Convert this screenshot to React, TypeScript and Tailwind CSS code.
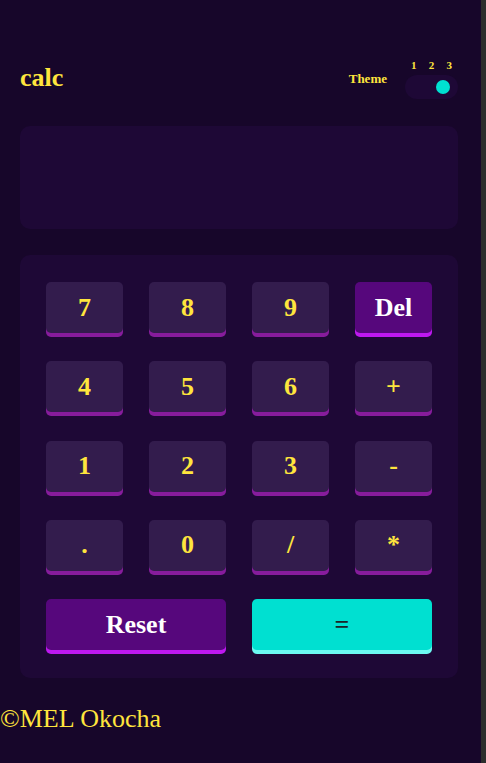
import React from "react";

const serif = "font-['Liberation_Serif','Times_New_Roman',serif]";

type K = { label: string; kind?: "num" | "del" | "eq"; wide?: boolean };

const keys: K[] = [
  { label: "7" }, { label: "8" }, { label: "9" }, { label: "Del", kind: "del" },
  { label: "4" }, { label: "5" }, { label: "6" }, { label: "+" },
  { label: "1" }, { label: "2" }, { label: "3" }, { label: "-" },
  { label: "." }, { label: "0" }, { label: "/" }, { label: "*" },
  { label: "Reset", kind: "del", wide: true }, { label: "=", kind: "eq", wide: true },
];

function Key({ k }: { k: K }) {
  const base =
    "h-[51px] rounded-[5px] flex items-center justify-center text-[26px] leading-[26px] font-bold";
  let cls = "bg-[#331c4d] text-[#ffe53d] shadow-[0_4px_0_#871c9c]";
  if (k.kind === "del") cls = "bg-[#56077c] text-white shadow-[0_4px_0_#be18f0]";
  if (k.kind === "eq") cls = "bg-[#00e0d1] text-[#1b2428] shadow-[0_4px_0_#6cf9f1]";
  return (
    <button className={`${base} ${cls} ${k.wide ? "col-span-2" : ""} ${serif}`}>{k.label}</button>
  );
}

export default function App() {
  return (
    <div className={`min-h-screen bg-[#17062a] border-r-[5px] border-[#2c2d2c] ${serif}`}>
      <main className="ml-[20px] w-[438px] pt-[60px]">
        <header className="flex justify-between items-end">
          <h1 className="text-[26px] leading-[26px] font-bold text-[#ffe53d] mb-[8px]">calc</h1>
          <div className="flex items-end gap-[18px]">
            <span className="text-[13px] leading-[13px] font-bold text-[#ffe53d] mb-[14px]">Theme</span>
            <div className="w-[53px] flex flex-col">
              <div className="flex justify-between px-[6px] text-[11px] leading-[11px] font-bold text-[#ffe53d] mb-[4px]">
                <span>1</span>
                <span>2</span>
                <span>3</span>
              </div>
              <div className="h-[24px] rounded-full bg-[#1e0836] flex items-center justify-end pr-[8px]">
                <span className="w-[14px] h-[14px] rounded-full bg-[#00e0d1]" />
              </div>
            </div>
          </div>
        </header>

        <section className="mt-[27px] h-[103px] rounded-[10px] bg-[#1e0836]" />

        <section className="mt-[26px] rounded-[10px] bg-[#1e0836] pt-[27px] pb-[28px] px-[26px] grid grid-cols-4 gap-x-[26px] gap-y-[28.3px]">
          {keys.map((k, i) => (
            <Key key={i} k={k} />
          ))}
        </section>
      </main>
      <footer className="mt-[28px] text-[26px] leading-[26px] text-[#ffe53d] pb-[40px]">©MEL Okocha</footer>
    </div>
  );
}
